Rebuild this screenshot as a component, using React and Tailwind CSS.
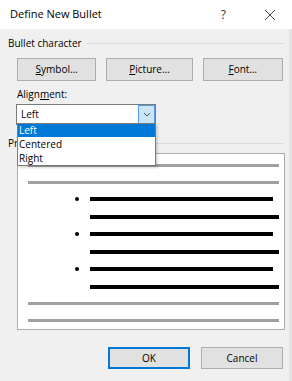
import React from "react";

const gray = "h-[3px] bg-[#a0a0a0]";
const black = "h-[4px] bg-black";

const BulletRow = ({ bullet }) => (
  <div className="flex items-center h-[4px]">
    <div className="w-[62px] flex justify-end pr-[11px]">
      {bullet && <div className="w-[4px] h-[4px] rounded-full bg-black" />}
    </div>
    <div className={`${black} flex-1 ${bullet ? "mr-[11px]" : "mr-[5px]"}`} />
  </div>
);

const App = () => {
  return (
    <div
      className="w-[292px] h-[381px] flex flex-col bg-[#f0f0f0] text-[10px] text-black"
      style={{ fontFamily: "'Open Sans', 'Noto Sans', sans-serif" }}
    >
      {/* Title bar */}
      <div className="h-[29px] bg-white flex items-center pl-[10px] pr-[14px]">
        <div className="text-[11px] flex-1">Define New Bullet</div>
        <div className="text-[12px] text-[#333] mr-[38px]">?</div>
        <svg width="12" height="12" viewBox="0 0 12 12" className="mr-[2px]">
          <path d="M1 1 L11 11 M11 1 L1 11" stroke="#444" strokeWidth="1" />
        </svg>
      </div>

      <div className="flex-1 flex flex-col relative border-r-[3px] border-[#e3e3e3] pl-[8px] pr-[5px]">
        {/* Bullet character group */}
        <div className="flex items-center mt-[6px] h-[16px]">
          <span className="mr-[4px]">Bullet character</span>
          <div className="flex-1 h-px bg-[#dcdcdc]" />
        </div>

        <div className="flex mt-[7px] ml-[9px] gap-[10px] pr-[1px]">
          {["Symbol…", "Picture…", "Font…"].map((t, i) => (
            <button
              key={t}
              className={`h-[23px] ${i === 2 ? "w-[83px]" : i === 1 ? "w-[89px]" : "w-[82px]"} bg-[#e1e1e1] border border-[#adadad] text-[10px]`}
            >
              <span className="underline">{t[0]}</span>
              {t.slice(1)}
            </button>
          ))}
        </div>

        <div className="ml-[9px] mt-[5px] h-[16px] leading-[16px]">
          Align<span className="underline">m</span>ent:
        </div>

        {/* Select */}
        <div className="ml-[8px] mt-[2px] w-[140px] h-[21px] bg-white border border-[#7a7a7a] flex items-center">
          <span className="pl-[4px] flex-1">Left</span>
          <div className="w-[17px] h-[19px] bg-[#cce4f7] border border-[#569de5] flex items-center justify-center">
            <svg width="8" height="5" viewBox="0 0 8 5">
              <path d="M1 1 L4 4 L7 1" fill="none" stroke="#555" strokeWidth="1" />
            </svg>
          </div>
        </div>

        {/* Preview group */}
        <div className="flex items-center mt-[10px] h-[16px]">
          <span className="mr-[4px]">
            Pr<span className="underline">e</span>view
          </span>
          <div className="flex-1 h-px bg-[#dcdcdc]" />
        </div>

        <div className="ml-[9px] mt-[2px] w-[268px] h-[177px] bg-white border border-[#adadad] flex flex-col gap-[13.5px] pt-[10px] pl-[10px]">
          <div className={`${gray} mr-[5px]`} />
          <div className={`${gray} mr-[5px]`} />
          <BulletRow bullet />
          <BulletRow />
          <BulletRow bullet />
          <BulletRow />
          <BulletRow bullet />
          <BulletRow />
          <div className={`${gray} mr-[5px]`} />
          <div className={`${gray} mr-[5px]`} />
        </div>

        {/* Buttons */}
        <div className="flex justify-end gap-[11px] mt-[17px] pr-[1px]">
          <button className="w-[82px] h-[22px] bg-[#e1e1e1] border-2 border-[#0078d7] text-[10px]">
            OK
          </button>
          <button className="w-[82px] h-[22px] bg-[#e1e1e1] border border-[#adadad] text-[10px]">
            Cancel
          </button>
        </div>

        {/* Dropdown list */}
        <div className="absolute left-[17px] top-[94px] w-[139px] bg-white border border-[#7a7a7a] flex flex-col shadow-[2px_2px_2px_rgba(0,0,0,0.15)]">
          <div className="h-[13px] leading-[13px] pl-[1px] bg-[#0078d7] text-white">Left</div>
          <div className="h-[14px] leading-[14px] pl-[1px]">Centered</div>
          <div className="h-[14px] leading-[14px] pl-[1px]">Right</div>
        </div>
      </div>
    </div>
  );
};

export default App;
